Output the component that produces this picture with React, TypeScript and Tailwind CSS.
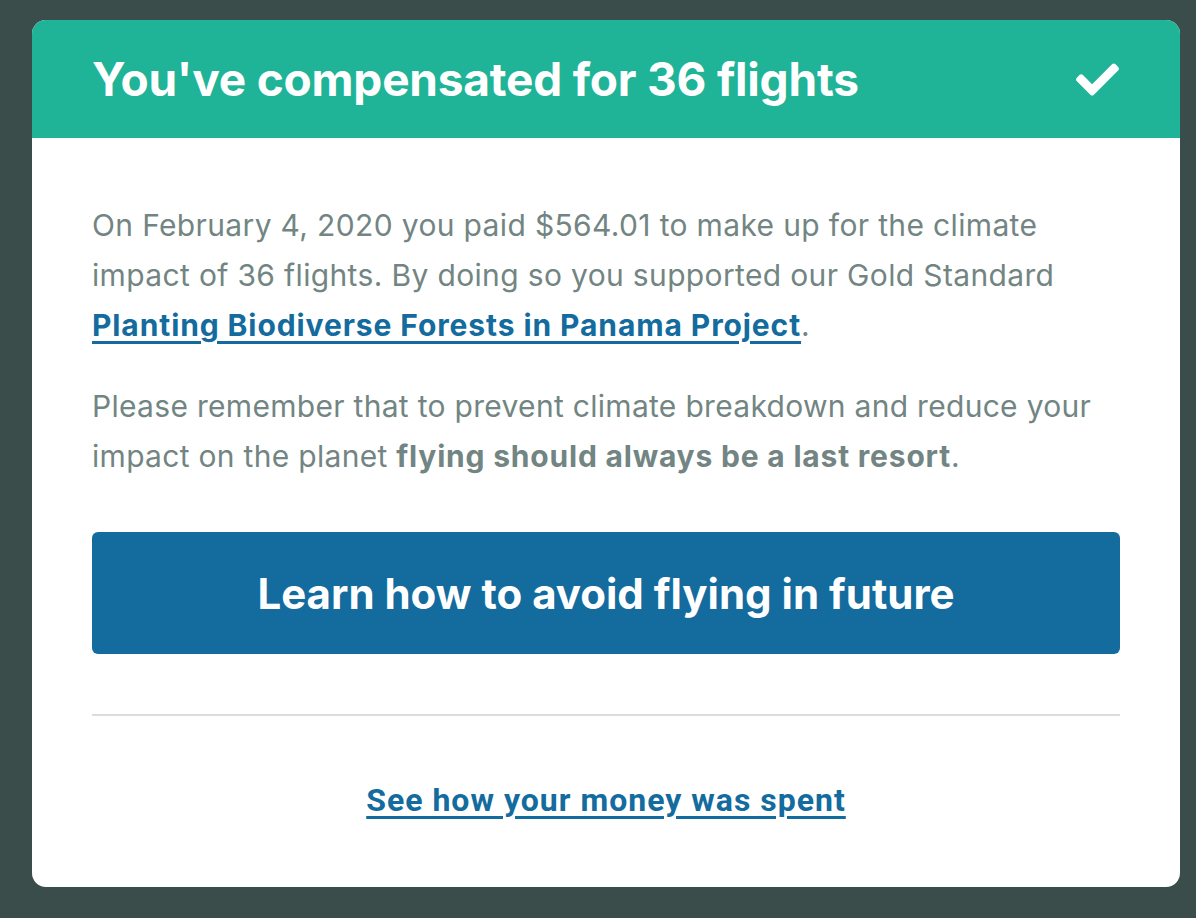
import { FaCheck } from 'react-icons/fa';

export default function App() {
  return (
    <div className="min-h-[918px] w-full bg-[#3a4d4b] pl-8 pr-4 pt-5 pb-8" style={{ fontFamily: 'Inter, "Noto Sans", sans-serif' }}>
      <div className="overflow-hidden rounded-[14px] bg-white">
        {/* Header */}
        <div className="flex h-[118px] items-center justify-between bg-[#1fb398] pl-[60px] pr-[61px]">
          <h1 className="text-[46px] font-bold leading-none tracking-[-0.2px] text-white">
            You've compensated for 36 flights
          </h1>
          <FaCheck className="h-[43px] w-[43px] text-white" />
        </div>

        {/* Body */}
        <div className="px-[60px] pt-[62px] pb-[62px]">
          <p className="text-[30px] leading-[50px] tracking-[0.35px] text-[#728583]">
            On February 4, 2020 you paid $564.01 to make up for the climate
            <br />
            impact of 36 flights. By doing so you supported our Gold Standard
            <br />
            <a href="#" className="font-bold tracking-[0.9px] text-[#136b9e] underline underline-offset-[5px]">
              Planting Biodiverse Forests in Panama Project
            </a>
            .
          </p>
          <p className="mt-[31px] text-[30px] leading-[50px] tracking-[0.3px] text-[#728583]">
            Please remember that to prevent climate breakdown and reduce your
            <br />
            impact on the planet <span className="font-bold tracking-[0.8px]">flying should always be a last resort</span>.
          </p>

          <button className="mt-[51px] flex h-[122px] w-full items-center justify-center rounded-[6px] bg-[#136b9e] text-[42px] font-bold text-white">
            Learn how to avoid flying in future
          </button>

          <div className="mt-[60px] h-[2px] bg-[#dcdcdc]" />

          <div className="mt-[64px] text-center leading-[40px]">
            <a
              href="#"
              className="text-[32px] font-bold tracking-[1px] text-[#136b9e] underline underline-offset-[5px]"
              style={{ fontFamily: 'Roboto, sans-serif' }}
            >
              See how your money was spent
            </a>
          </div>
        </div>
      </div>
    </div>
  );
}
